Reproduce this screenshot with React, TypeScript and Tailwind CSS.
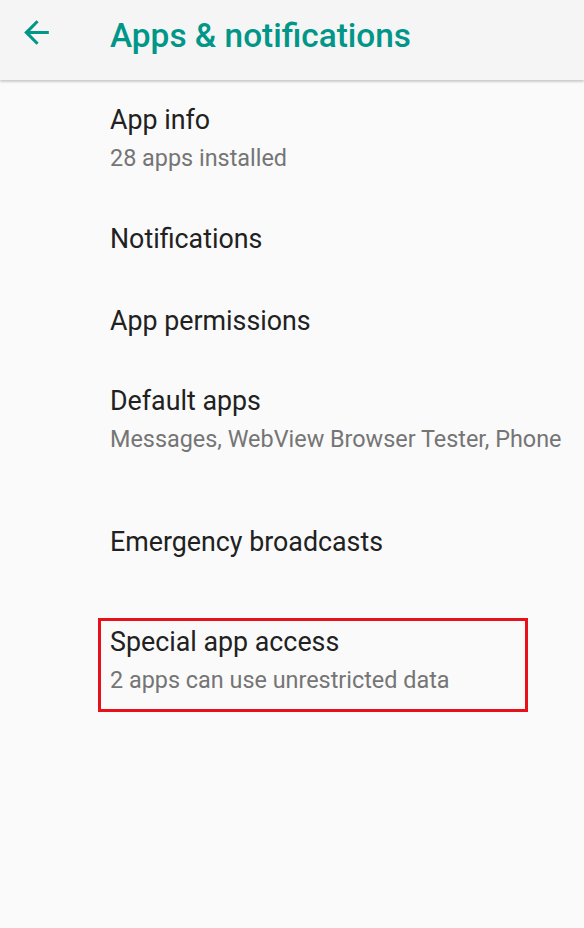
const items = [
  { title: "App info", sub: "28 apps installed", h: "h-[118px]" },
  { title: "Notifications", h: "h-[82px]" },
  { title: "App permissions", h: "h-[81px]" },
  { title: "Default apps", sub: "Messages, WebView Browser Tester, Phone", h: "h-[117px]" },
  { title: "Emergency broadcasts", h: "h-[128px]" },
];

function Row({ title, sub }: { title: string; sub?: string }) {
  return (
    <div className="flex flex-col justify-center">
      <div className="text-[26.8px] leading-[38px] text-[#212121]">{title}</div>
      {sub && <div className="text-[23.4px] leading-[38px] text-[#757575]">{sub}</div>}
    </div>
  );
}

export default function App() {
  return (
    <div className="h-[928px] w-[584px] overflow-hidden bg-[#fafafa] font-['Roboto',sans-serif]">
      <header className="relative flex h-[80px] items-start bg-[#f5f5f5] shadow-[0_2px_2px_rgba(0,0,0,0.18)]">
        <svg viewBox="0 0 24 24" className="ml-[18px] mt-[14px] size-[37px] fill-[#009688]">
          <path d="M20 11H7.83l5.59-5.59L12 4l-8 8 8 8 1.41-1.41L7.83 13H20v-2z" />
        </svg>
        <h1 className="ml-[55px] mt-[14px] text-[33.4px] leading-[44px] font-medium text-[#009688]">
          Apps &amp; notifications
        </h1>
      </header>
      <div className="flex flex-col">
        {items.map((it) => (
          <div key={it.title} className={`flex items-center pl-[110px] ${it.h}`}>
            <Row title={it.title} sub={it.sub} />
          </div>
        ))}
        <div className="pl-[98px] pt-[12px]">
          <div className="flex h-[94px] w-[430px] flex-col justify-center border-[3px] border-[#e8101a] pb-[8px] pl-[9px]">
            <Row title="Special app access" sub="2 apps can use unrestricted data" />
          </div>
        </div>
      </div>
    </div>
  );
}
